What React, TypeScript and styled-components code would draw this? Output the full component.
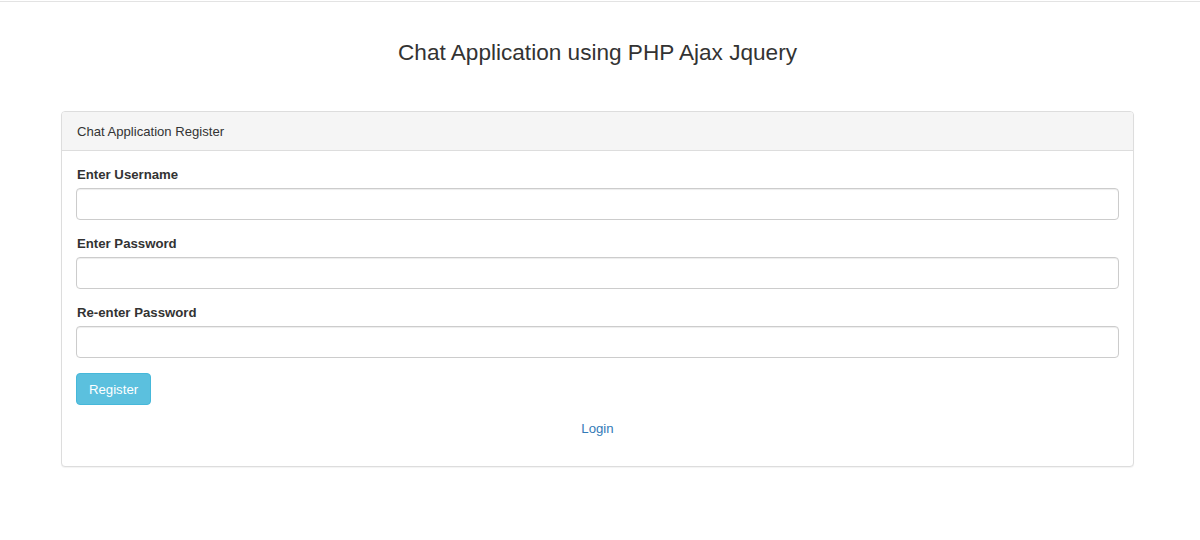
import React from "react";
import styled, { createGlobalStyle } from "styled-components";

const Global = createGlobalStyle`
  html, body { margin: 0; padding: 0; background: #fff; }
  body {
    font-family: "Liberation Sans", Arial, Helvetica, sans-serif;
    font-size: 13px;
    color: #333;
  }
  * { box-sizing: border-box; }
`;

const Page = styled.div`
  margin-top: 1px;
  border-top: 1px solid #e3e3e3;
  min-height: 539px;
`;

const Container = styled.div`
  width: 1073px;
  margin-left: 61px;
  display: flex;
  flex-direction: column;
`;

const Title = styled.h3`
  margin: 0;
  padding-top: 35px;
  height: 109px;
  text-align: center;
  font-size: 22.6px;
  font-weight: 400;
  line-height: 32px;
  color: #333;
`;

const Panel = styled.div`
  border: 1px solid #ddd;
  border-radius: 4px;
  background: #fff;
  box-shadow: 0 1px 1px rgba(0, 0, 0, 0.05);
`;

const PanelHeading = styled.div`
  height: 39px;
  padding: 0 15px;
  display: flex;
  align-items: center;
  background: #f5f5f5;
  border-bottom: 1px solid #ddd;
  border-radius: 3px 3px 0 0;
  font-size: 13.1px;
  color: #333;
`;

const PanelBody = styled.div`
  padding: 14.5px 14px 28px;
  display: flex;
  flex-direction: column;
`;

const FormGroup = styled.div`
  display: flex;
  flex-direction: column;
  margin-bottom: 14.5px;
`;

const Label = styled.label`
  font-weight: 700;
  font-size: 13.2px;
  line-height: 18px;
  margin-bottom: 4.5px;
  padding-left: 1px;
  color: #333;
`;

const Input = styled.input`
  width: 100%;
  height: 32px;
  padding: 6px 11px;
  border: 1px solid #ccc;
  border-radius: 4px;
  box-shadow: inset 0 1px 1px rgba(0, 0, 0, 0.075);
  font-family: inherit;
  font-size: 13px;
  color: #555;
  outline: none;
`;

const ButtonRow = styled.div`
  display: flex;
  margin-top: 0.5px;
`;

const Button = styled.button`
  height: 32px;
  padding: 0 12px;
  border: 1px solid #46b8da;
  border-radius: 4px;
  background: #5bc0de;
  color: #fff;
  font-family: inherit;
  font-size: 13.2px;
  cursor: pointer;
`;

const LinkRow = styled.div`
  display: flex;
  justify-content: center;
  margin-top: 14.5px;
  line-height: 18px;
`;

const Link = styled.a`
  color: #337ab7;
  text-decoration: none;
  font-size: 13.2px;
`;

export default function App() {
  return (
    <>
      <Global />
      <Page>
        <Container>
          <Title>Chat Application using PHP Ajax Jquery</Title>
          <Panel>
            <PanelHeading>Chat Application Register</PanelHeading>
            <PanelBody>
              <FormGroup>
                <Label>Enter Username</Label>
                <Input type="text" />
              </FormGroup>
              <FormGroup>
                <Label>Enter Password</Label>
                <Input type="password" />
              </FormGroup>
              <FormGroup>
                <Label>Re-enter Password</Label>
                <Input type="password" />
              </FormGroup>
              <ButtonRow>
                <Button type="button">Register</Button>
              </ButtonRow>
              <LinkRow>
                <Link href="#">Login</Link>
              </LinkRow>
            </PanelBody>
          </Panel>
        </Container>
      </Page>
    </>
  );
}
